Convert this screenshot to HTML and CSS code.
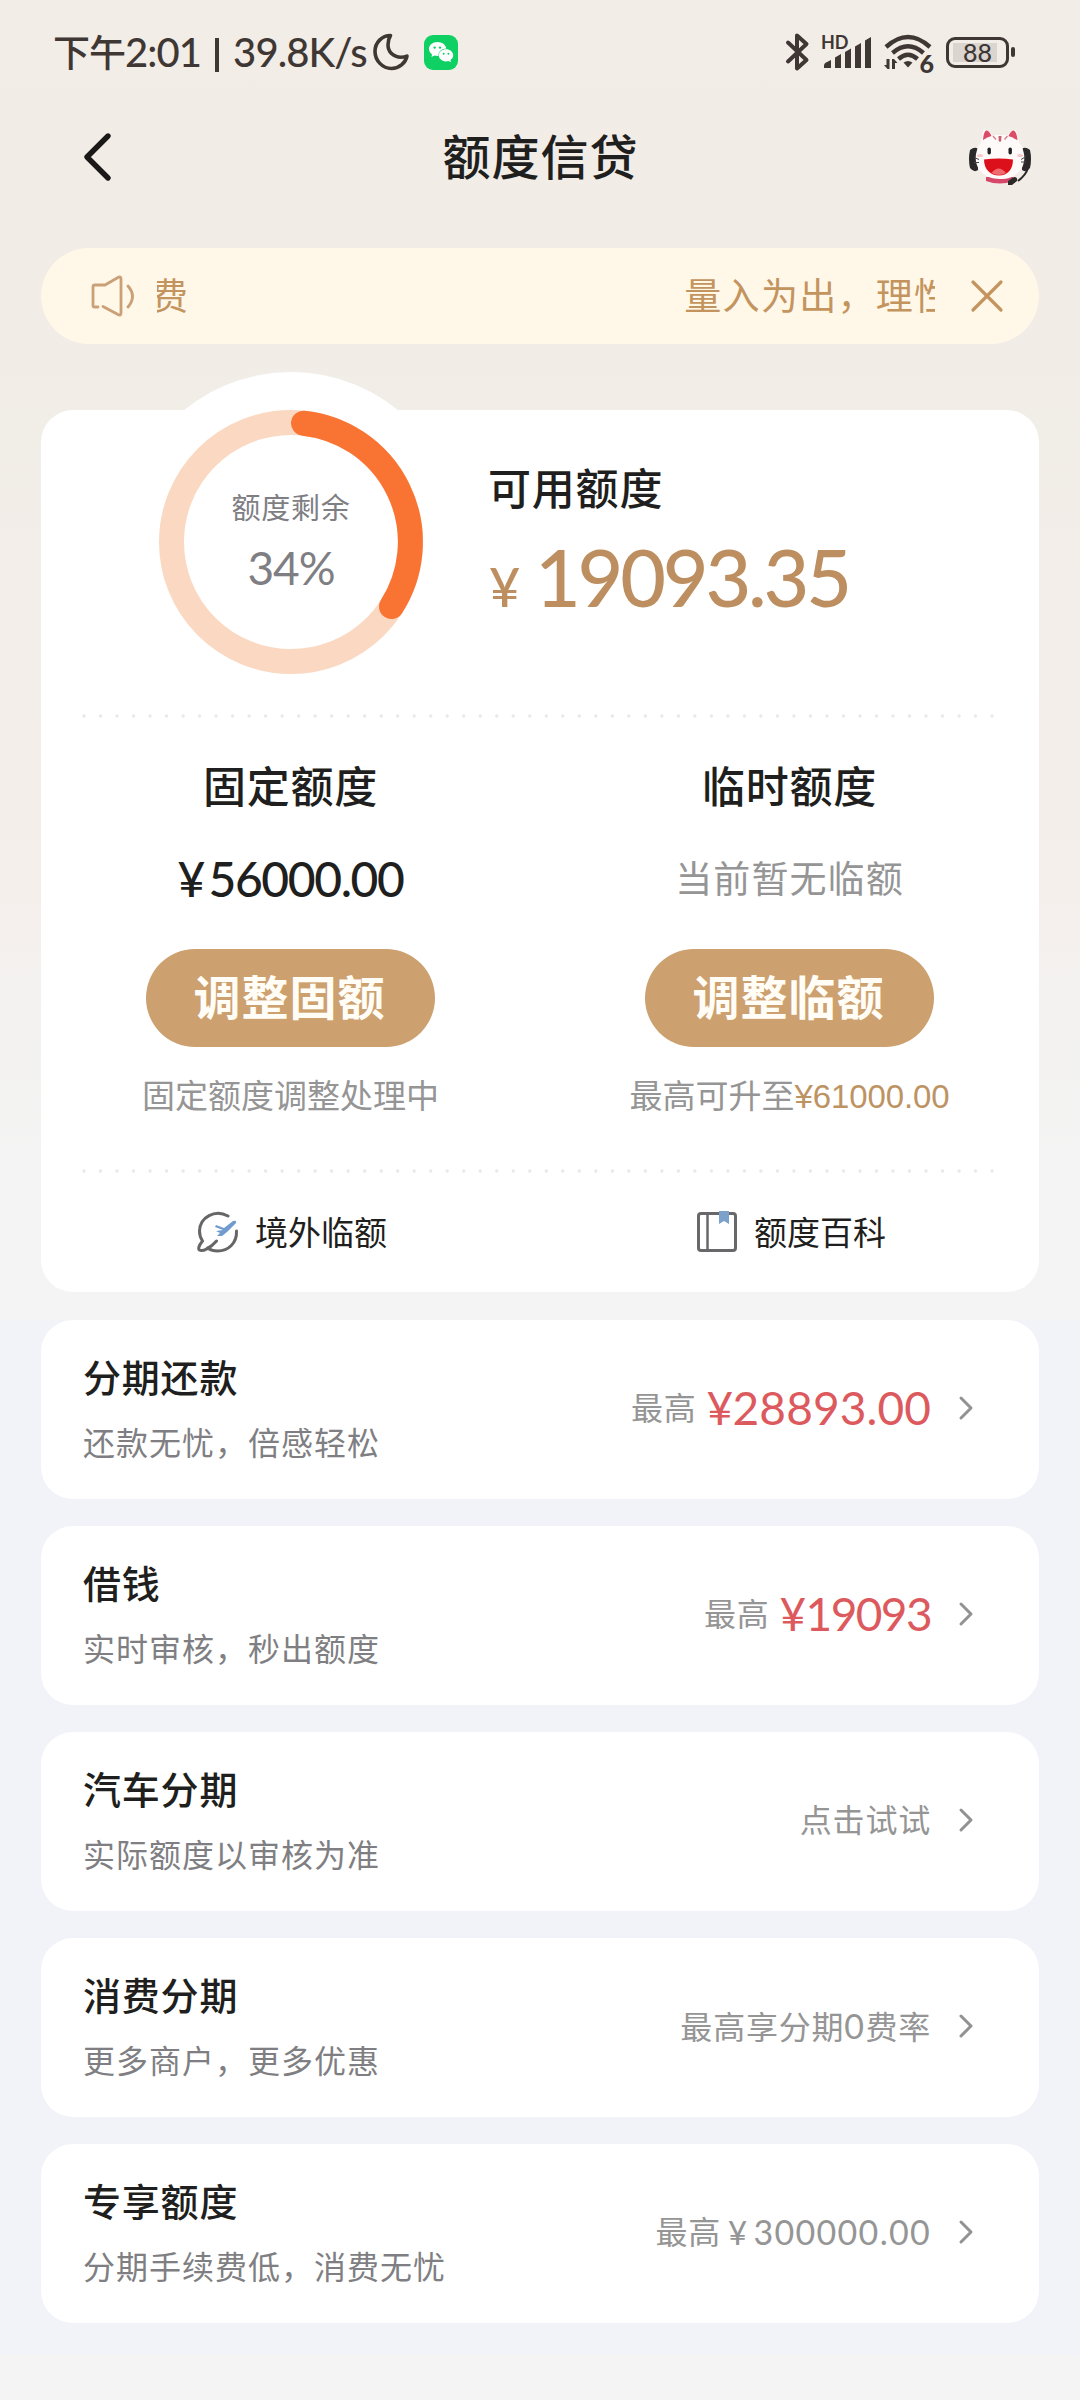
FILE: index.html
```html
<!DOCTYPE html>
<html lang="zh-CN">
<head>
<meta charset="utf-8">
<title>额度信贷</title>
<link rel="stylesheet" href="styles.css">
</head>
<body>
<div class="page">
  <header class="status">
    <div class="status-left">
      <span class="clock"><span class="cn">下午</span>2:01<span class="bar"></span>39.8K/s</span>
      <svg class="moon" width="38" height="40" viewBox="0 0 38 40"><path d="M18.500 3.500C10 3.500 3 10.500 3 19.500S10.500 36.500 19.500 36.500c7.500 0 14-5.500 15.500-12.500-2 1-4 1.200-6 1.200-8 0-13-5.500-13-12.500 0-3.500.8-6.500 2.500-9.200z" fill="none" stroke="#3f3733" stroke-width="3.600" stroke-linejoin="round"/></svg>
      <svg class="wechat" width="34" height="35" viewBox="0 0 34 35"><rect width="34" height="35" rx="9" fill="#0ed063"/><path d="M13.500 7C8.700 7 5 10.100 5 14c0 2.200 1.200 4.100 3.100 5.400L7.400 22l3.100-1.500c1 .3 2 .4 3 .4h.9c-.2-4.200 3.500-7.400 8-7.400C21.700 9.800 18 7 13.500 7z" fill="#fff"/><path d="M22 14.200c-4 0-7.200 2.700-7.200 6.100s3.200 6.100 7.200 6.100c.9 0 1.700-.1 2.500-.4l2.500 1.300-.6-2.200c1.700-1.100 2.800-2.900 2.800-4.800 0-3.400-3.200-6.100-7.200-6.100z" fill="#fff"/><g fill="#0ed063"><circle cx="10.600" cy="12.600" r="1.200"/><circle cx="16" cy="12.600" r="1.200"/><circle cx="19.700" cy="18.800" r="1"/><circle cx="24.400" cy="18.800" r="1"/></g></svg>
    </div>
    <div class="status-right">
      <svg width="26" height="40" viewBox="0 0 26 40"><path d="M3 10.500 21.500 28 12 36.500V3.500L21.500 12 3 29.500" fill="none" stroke="#3f3733" stroke-width="4" stroke-linejoin="round" stroke-linecap="round"/></svg>
      <div class="signal">
        <span class="hd">HD</span>
        <svg width="50" height="32" viewBox="0 0 50 32"><path d="M1 32v-2.500q0-2 2-3l5-2.500v8zM12 32V21.500l6-3.500v14zM22 32V16l6-3.500V32zM32 32V10.500l6-3.500v25zM42 32V4.500l6-3.500v31z" fill="#3f3733"/></svg>
      </div>
      <div class="wifi">
        <svg width="50" height="40" viewBox="0 0 50 40"><g fill="none" stroke="#3f3733" stroke-width="4.400"><path d="M2 15Q24 -5 46 15"/><path d="M8.500 21Q24 7.500 39.500 21"/><path d="M14.500 27Q24 18.500 33.500 27"/></g><path d="M19.500 30.500q4.500-3 9 0L24 35.500zM5.500 27v10h-2L0 33h2.500v-6zM8 37V27h2l3.500 4H11v6z" fill="#3f3733"/></svg>
        <span class="wifi-gen">6</span>
      </div>
      <div class="battery"><div class="battery-body"><span class="battery-level">88</span></div><i class="battery-nub"></i></div>
    </div>
  </header>

  <nav class="nav">
    <svg class="back" width="32" height="54" viewBox="0 0 32 54"><path d="M27 6 6 27l21 21" fill="none" stroke="#1b1818" stroke-width="5.400" stroke-linecap="round" stroke-linejoin="round"/></svg>
    <h1>额度信贷</h1>
    <svg class="mascot" width="64" height="58" viewBox="0 0 64 58">
      <path d="M2 22q5-4 8-1v21q-4 3-8-2-2-9 0-18zM62 22q-5-4-8-1v21q4 3 8-2 2-9 0-18z" fill="#2b2929"/>
      <path d="M13 14 15 2.500Q19-.5 24.500 7.500L39 7.500Q45-.5 48 2.500L51 14z" fill="#fffafa"/>
      <path d="M15 12q.5-8 3-9.500 3-1 6 6.500zM49.500 12q-.8-8-3.500-9.500-3-1-6 6.500z" fill="#dc4c66"/>
      <path d="M18 49h27v4q-13 5-27 0z" fill="#d5486a"/>
      <path d="M32 7c14 0 22 7 24 19 2 13-6 25-24 25S6 39 8 26C10 14 18 7 32 7z" fill="#fffafa"/>
      <path d="m25 8 3 3.500M39.500 8l-3 3.500" stroke="#d98490" stroke-width="1.500"/><path d="M30.500 8h3l-.3 5-1.200 1-1.300-1z" fill="#c9606f"/>
      <ellipse cx="12" cy="27.500" rx="3" ry="1.500" fill="#f8c8ca"/><ellipse cx="52" cy="27.500" rx="3" ry="1.500" fill="#f8c8ca"/>
      <rect x="19.500" y="19.500" width="3.400" height="7" rx="1.700" fill="#222"/><rect x="40.500" y="19.500" width="3.400" height="7" rx="1.700" fill="#222"/>
      <path d="M16 31.500q15-2 29 0c0 10-5.500 16-14 16s-15-6-15-16z" fill="#dc101b"/><path d="M23.500 45q7-9 14.500 0-7 4-14.500 0z" fill="#f06b70"/>
      <path d="M6 29.500l5 2M6 34.500h5M58 28.500l-5 3M58 34h-5" stroke="#444" stroke-width="1"/><path d="M60 40q-2 7-10 13" fill="none" stroke="#2b2929" stroke-width="2"/><path d="m40 53 6-4q4 0 3 4l-5 4h-4z" fill="#2b2929"/>
    </svg>
  </nav>

  <div class="notice">
    <svg class="speaker" width="48" height="44" viewBox="0 0 48 44"><g fill="none" stroke="#c9a077" stroke-width="2.800" stroke-linecap="round" stroke-linejoin="round"><path d="M9 33H5.500Q4 33 4 31.500V13q0-2 2-2h10L29 3.500q3-1.500 3 1.500V39q0 3-3 1.500L14 32.500"/><path d="M39 12q9 10.500 0 21"/></g></svg>
    <div class="marquee"><span>费</span><span class="marquee-next">量入为出，理性</span></div>
    <svg class="close" width="34" height="34" viewBox="0 0 34 34"><path d="m3 3 28 28M31 3 3 31" stroke="#c4945f" stroke-width="3.200" stroke-linecap="round"/></svg>
  </div>

  <main class="card">
    <section class="overview">
      <div class="gauge">
        <svg class="gauge-ring" width="264" height="264" viewBox="0 0 264 264"><circle cx="132" cy="132" r="119.500" fill="none" stroke="#fad8c1" stroke-width="25"/><path d="M144.500 13.200A119.500 119.500 0 0 1 232.500 196.500" fill="none" stroke="#f97432" stroke-width="25" stroke-linecap="round"/></svg>
        <div class="gauge-text"><span class="gauge-label">额度剩余</span><span class="gauge-value">34%</span></div>
      </div>
      <div class="available">
        <h2>可用额度</h2>
        <p class="total"><span class="yen">¥</span>19093.35</p>
      </div>
    </section>
    <svg class="dots" width="916" height="4" viewBox="0 0 916 4"><path d="M2 2H914" stroke="#e9e9eb" stroke-width="3.400" stroke-linecap="round" stroke-dasharray="0 16.510"/></svg>
    <section class="limits">
      <div class="limit">
        <h2>固定额度</h2>
        <p class="limit-value"><span class="limit-yen">¥</span>56000.00</p>
        <button class="adjust">调整固额</button>
        <p class="hint">固定额度调整处理中</p>
      </div>
      <div class="limit">
        <h2>临时额度</h2>
        <p class="limit-none">当前暂无临额</p>
        <button class="adjust">调整临额</button>
        <p class="hint">最高可升至<span class="hint-amount">¥61000.00</span></p>
      </div>
    </section>
    <svg class="dots" width="916" height="4" viewBox="0 0 916 4"><path d="M2 2H914" stroke="#e9e9eb" stroke-width="3.400" stroke-linecap="round" stroke-dasharray="0 16.510"/></svg>
    <section class="links">
      <a class="link"><svg width="42" height="42" viewBox="0 0 42 42"><g fill="none" stroke="#666668" stroke-width="3" stroke-linecap="round"><path d="M31 5C18-2 3 6 2.500 20c0 4 1 7 3 10-4 5-4.500 8-3 9 3 2 11-2 17-9"/><path d="M39.500 20c.5 12-8 20-19 20-4 0-7-1-10-3"/></g><path d="m19 14 8 3 9-7q4-1 3 2l-9 9-5 4h-5l3-3-4-2 7-1-8-3z" fill="#6f9bcf"/></svg><span>境外临额</span></a>
      <a class="link"><svg width="42" height="42" viewBox="0 0 42 42"><rect x="2.500" y="2.500" width="37" height="37" rx="2.500" fill="none" stroke="#68686a" stroke-width="3"/><path d="M11.500 3v36" stroke="#68686a" stroke-width="2.500"/><path d="M23 0h10v13l-5-3-5 3z" fill="#7ca1cb"/></svg><span>额度百科</span></a>
    </section>
  </main>

  <section class="list">
    <article class="item"><div class="item-text"><h3>分期还款</h3><p>还款无忧，倍感轻松</p></div><div class="item-side"><span class="label">最高</span><b class="amount"><span class="amount-yen">¥</span>28893.00</b><svg class="chevron" width="20" height="28" viewBox="0 0 20 28"><path d="m4 4 10 10L4 24"/></svg></div></article>
    <article class="item"><div class="item-text"><h3>借钱</h3><p>实时审核，秒出额度</p></div><div class="item-side"><span class="label">最高</span><b class="amount amount-tight"><span class="amount-yen">¥</span>19093</b><svg class="chevron" width="20" height="28" viewBox="0 0 20 28"><path d="m4 4 10 10L4 24"/></svg></div></article>
    <article class="item"><div class="item-text"><h3>汽车分期</h3><p>实际额度以审核为准</p></div><div class="item-side"><span>点击试试</span><svg class="chevron" width="20" height="28" viewBox="0 0 20 28"><path d="m4 4 10 10L4 24"/></svg></div></article>
    <article class="item"><div class="item-text"><h3>消费分期</h3><p>更多商户，更多优惠</p></div><div class="item-side"><span>最高享分期<span class="num">0</span>费率</span><svg class="chevron" width="20" height="28" viewBox="0 0 20 28"><path d="m4 4 10 10L4 24"/></svg></div></article>
    <article class="item"><div class="item-text"><h3>专享额度</h3><p>分期手续费低，消费无忧</p></div><div class="item-side"><span>最高</span><span class="num quota-yen">¥</span><span class="num">300000.00</span><svg class="chevron" width="20" height="28" viewBox="0 0 20 28"><path d="m4 4 10 10L4 24"/></svg></div></article>
  </section>
</div>
</body>
</html>
```
FILE: styles.css
```css
* { box-sizing: border-box; }
body, h1, h2, h3, p { margin: 0; }
body {
  background: #f4f4f4;
  color: #1f1f20;
  font-family: Lato, "Noto Sans CJK SC", sans-serif;
}
h1, h2, h3 { font-weight: 500; }
svg { display: block; flex: none; }

.page {
  width: 1080px;
  height: 2400px;
  overflow: hidden;
  background: linear-gradient(#f2ede7 0, #f2ece7 270px, #f1ede7 420px, #f3eeea 760px, #f5efec 900px, #f3f2f1 1010px, #f4f4f4 1200px);
}

/* status bar */
.status {
  height: 104px;
  display: flex;
  justify-content: space-between;
  padding: 0 65px 0 53px;
  color: #3f3733;
}
.status-left, .status-right { display: flex; align-items: center; }
.clock { font-size: 40px; line-height: 104px; font-weight: 500; white-space: nowrap; letter-spacing: -0.9px; width: 319px; }
.clock .cn { font-size: 37px; letter-spacing: -1px; }
.bar { display: inline-block; width: 4px; height: 34px; margin: 0 14px 0 14px; background: #3f3733; vertical-align: -5px; }
.wechat { margin-left: 14px; }
.signal { position: relative; width: 50px; height: 32px; margin: 0 11px 0 12px; }
.hd { position: absolute; left: -2px; top: -3px; font-size: 18px; line-height: 18px; font-weight: 700; }
.wifi { position: relative; margin-right: 12px; }
.wifi-gen { position: absolute; right: 0; bottom: -3px; font-size: 25px; line-height: 24px; font-weight: 900; }
.battery { display: flex; align-items: center; gap: 2px; }
.battery-body { width: 63px; height: 31px; border: 3px solid #3f3733; border-radius: 9px; padding: 3px 9px 3px 4px; }
.battery-level { display: block; height: 19px; background: #dad5d0; font: 500 25px/19px Lato, sans-serif; text-align: center; padding-left: 5px; }
.battery-nub { width: 4px; height: 10px; border-radius: 2px; background: #3f3733; }

/* navigation */
.nav { height: 106px; display: flex; align-items: center; justify-content: space-between; padding: 0 48px 0 81px; }
.nav h1 { font-size: 48px; line-height: 60px; letter-spacing: 1px; }

/* notice */
.notice { margin: 38px 41px 0; height: 96px; border-radius: 48px; background: #fff8e8; color: #c4945f; display: flex; align-items: center; padding: 0 35px 0 48px; }
.marquee { width: 778px; margin-left: 20px; margin-right: 35px; overflow: hidden; display: flex; font-size: 37px; line-height: 54px; letter-spacing: 1.3px; white-space: nowrap; text-indent: -6px; }
.marquee-next { margin-left: 501px; }

/* quota card */
.card { margin: 66px 41px 0; height: 882px; background: #fff; border-radius: 32px; }
.overview { height: 304px; display: flex; padding-left: 118px; }
.gauge { position: relative; width: 264px; height: 264px; display: grid; }
.gauge::before { content: ""; grid-area: 1 / 1; margin: -38px; border-radius: 50%; background: #fff; }
.gauge-ring, .gauge-text { grid-area: 1 / 1; position: relative; }
.gauge-text { display: flex; flex-direction: column; align-items: center; color: #7e7e83; padding-top: 78px; }
.gauge-label { font-size: 29px; line-height: 40px; letter-spacing: 0.8px; }
.gauge-value { font-size: 46px; line-height: 56px; margin-top: 12px; letter-spacing: -1px; }
.available { margin-left: 65px; padding-top: 49px; }
.available h2, .limit h2 { font-size: 43px; line-height: 60px; letter-spacing: 0.8px; }
.total { font-size: 79px; line-height: 96px; margin-top: 10px; font-weight: 500; color: #bd8f60; letter-spacing: -3.2px; white-space: nowrap; }
.yen { font-size: 54px; display: inline-block; width: 47px; padding-left: 1px; }
.dots { margin: 0 auto; }
.limits { height: 451px; display: flex; padding-top: 39px; }
.limit { width: 499px; display: flex; flex-direction: column; align-items: center; }
.limit-value, .limit-none { line-height: 60px; margin-top: 32px; }
.limit-value { font-size: 48px; font-weight: 500; letter-spacing: -1.4px; }
.limit-yen { display: inline-block; width: 31px; }
.limit-none { font-size: 37px; letter-spacing: 1.1px; color: #959595; }
.adjust { width: 289px; height: 98px; margin-top: 40px; border: 0; border-radius: 49px; background: #cca06f; color: #fffdf5; font: 700 47px/92px "Noto Sans CJK SC", sans-serif; letter-spacing: 1px; padding: 0 2px 6px 0; }
.hint { font-size: 33px; line-height: 48px; margin-top: 24px; margin-bottom: 1px; color: #959595; white-space: nowrap; }
.hint-amount { font-family: "Liberation Sans", sans-serif; color: #bd9364; letter-spacing: -0.1px; }
.links { display: flex; padding-top: 37px; }
.link { width: 499px; display: flex; justify-content: center; align-items: center; gap: 16px; font-size: 33px; line-height: 44px; padding-left: 3px; }

/* product list */
.list { margin-top: 28px; height: 1034px; padding: 0 41px; display: flex; flex-direction: column; gap: 27px; background: #f2f3f8; }
.item { height: 179px; border-radius: 32px; background: #fff; display: flex; align-items: center; justify-content: space-between; padding: 0 62px 3px 42px; flex: none; }
.item h3 { font-size: 38px; line-height: 56px; letter-spacing: 0.8px; margin-top: -2px; }
.item p { font-size: 32px; line-height: 46px; letter-spacing: 1px; margin-top: 15px; color: #7f7f83; }
.item-side { display: flex; align-items: center; font-size: 32px; line-height: 48px; letter-spacing: 0.8px; color: #959595; white-space: nowrap; }
.amount { font-size: 46px; font-weight: 400; color: #dc5a5e; letter-spacing: 0.1px; margin-left: 10px; }
.amount-yen { display: inline-block; width: 26px; }
.amount-tight { letter-spacing: -1.6px; }
.num { font-size: 34px; letter-spacing: 1.3px; }
.quota-yen { margin: 0 5px 0 7px; font-size: 33px; }
.chevron { margin-left: 26px; }
.chevron path { fill: none; stroke: #929294; stroke-width: 3; stroke-linecap: round; stroke-linejoin: round; }
```
